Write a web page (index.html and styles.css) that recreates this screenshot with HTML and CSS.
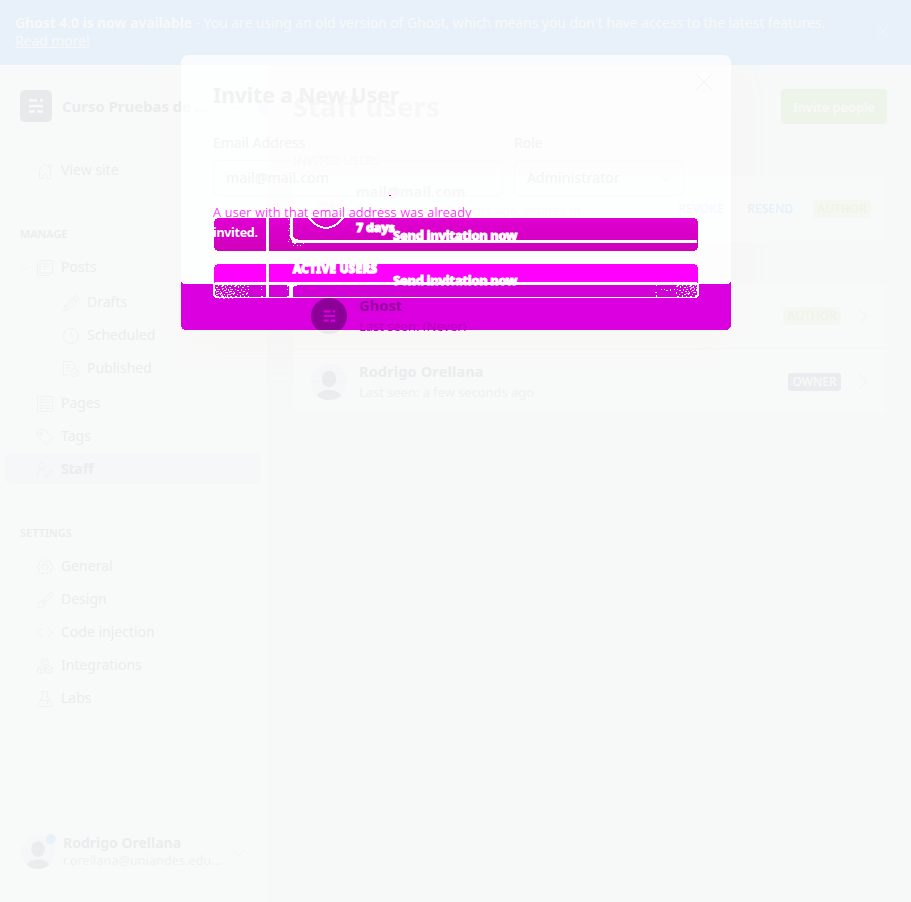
FILE: index.html
```html
<!DOCTYPE html>
<html lang="en">
<head>
<meta charset="utf-8">
<title>Staff users</title>
<link rel="stylesheet" href="styles.css">
</head>
<body>
<svg width="0" height="0" class="defs" aria-hidden="true">
  <symbol id="ghost" viewBox="0 0 14 14"><path d="M0 1.500h8M11 1.500h3M0 7h14M0 12.500h6M8.500 12.500h5.500" stroke="currentColor" stroke-width="2.600" fill="none"/></symbol>
  <symbol id="x" viewBox="0 0 16 16"><path d="M0 0l16 16M16 0L0 16"/></symbol>
  <symbol id="down" viewBox="0 0 12 8"><path d="M.5 1L6 6.500 11.500 1"/></symbol>
  <symbol id="right" viewBox="0 0 9 15"><path d="M.5.500L8 7.500.5 14.500"/></symbol>
  <symbol id="person" viewBox="0 0 36 36"><circle cx="18" cy="18" r="18" fill="#f5f7f9"/><ellipse cx="18" cy="15" rx="7.200" ry="8.300" fill="#ebecee"/><path d="M6 31.500Q9 26 18 26t12 5.500Q25 36 18 36T6 31.500" fill="#ebecee"/></symbol>
</svg>
<div class="app">
  <div class="banner">
    <p><b>Ghost 4.0 is now available</b> - You are using an old version of Ghost, which means you don't have access to the latest features. <br><u>Read more!</u></p>
    <svg class="ic banner-x" viewBox="0 0 16 16"><use href="#x"/></svg>
  </div>
  <div class="body">
    <aside class="side">
      <div class="site">
        <span class="logo"><svg width="14" height="14"><use href="#ghost"/></svg></span>
        <b class="site-name">Curso Pruebas de ...</b>
        <svg class="ic" viewBox="0 0 16 16"><circle cx="6.500" cy="6.500" r="6"/><path d="M11 11l5 5"/></svg>
        <i class="dot"></i>
      </div>
      <nav>
        <a class="item"><svg class="ic" viewBox="0 0 16 16"><path d="M.5 8.500L8 1l7.500 7.500M2.500 8v7.500h3.500V12q2-3 4 0v3.500h3.500V8M12 4.500V1.500h2V6"/></svg>View site</a>
        <h4 class="manage">MANAGE</h4>
        <a class="item posts"><svg class="ic caret" viewBox="0 0 12 8"><use href="#down"/></svg><svg class="ic" viewBox="0 0 16 16"><path d="M3 .5h12.500v12.500H3zM.5 3v12.500H13M5.500 4h7.500M5.500 6.500h7.500M5.500 9h4"/></svg>Posts</a>
        <div class="sub">
          <a class="item"><svg class="ic" viewBox="0 0 16 16"><path d="M.5 15.500l1.500-5L11.500 1q1.500-1 3 .5t.5 3L5.500 14zM10 2.500L13.500 6M2 10.500L5.500 14M4 12l7.500-7.500"/></svg>Drafts</a>
          <a class="item"><svg class="ic" viewBox="0 0 16 16"><circle cx="8" cy="8" r="7.500"/><path d="M8 3.500V8h3.500"/></svg>Scheduled</a>
          <a class="item"><svg class="ic" viewBox="0 0 16 16"><path d="M6 14H.5V.5h8L12 4v3M3 4h4M3 7h5M3 10h3"/><circle cx="11.500" cy="11.500" r="4"/><path d="M9.500 11.500l1.500 1.500 2.500-3"/></svg>Published</a>
        </div>
        <a class="item"><svg class="ic" viewBox="0 0 16 16"><path d="M.5.500h15v15H.5zM3 3.500h3v3H3zM3 9.500h3v3H3zM8 4h5M8 6.500h5M8 10h5M8 12.500h5"/></svg>Pages</a>
        <a class="item"><svg class="ic" viewBox="0 0 16 16"><path d="M.5 1.500q0-1 1-1h5l9 8.500-6 6.500-9-9z"/><circle cx="4.500" cy="4.500" r="1.300"/></svg>Tags</a>
        <a class="item active"><svg class="ic" viewBox="0 0 16 16"><circle cx="5" cy="3.500" r="3"/><path d="M.5 13V11q0-3 4-3 2 0 3.500 1.500M8 15.500l.5-2.500 5-5q1-.5 1.500.5t.3 1.500l-5 5z"/></svg>Staff</a>
        <h4 class="settings">SETTINGS</h4>
        <a class="item"><svg class="ic" viewBox="0 0 16 16"><path d="M6.500 1.500L8 .5l1.500 1 .7 1.300 2.800-.8 1 1-.6 2.700 2.100 1V9.500l-2 1 .5 2.500-1.500 1.500-2.500-.7-1 1.700H7L6 13.800l-2.500.7L2 13l.6-2.500L.5 9V7l2-1L2 3.500 3.500 2l2.300.8z"/><circle cx="8" cy="8" r="3"/></svg>General</a>
        <a class="item"><svg class="ic" viewBox="0 0 16 16"><path d="M5.500 9L13 1q1.500-1 2.500 0t0 2.500L7.500 11M5.500 9q-3-.5-4 2.500-.2 2.500-1 4 4 .5 6-1 2-2-1-5.500M6.500 8L9 10"/></svg>Design</a>
        <a class="item"><svg class="ic" viewBox="0 0 16 16"><path d="M5 3L.5 8 5 13M11 3l4.500 5L11 13"/></svg>Code injection</a>
        <a class="item"><svg class="ic" viewBox="0 0 16 16"><path d="M8 .5l3.500 1.700v3.600L8 7.500 4.500 5.800V2.200zM4 8l3.500 1.700v4L4 15.500.5 13.700v-4zM12 8l3.500 1.700v4L12 15.500l-3.500-1.800v-4zM4.500 2.200L8 4l3.500-1.800M.5 9.700l3.500 2 3.500-2M8.500 9.700l3.500 2 3.500-2M4 11.700v3.800M12 11.700v3.800"/></svg>Integrations</a>
        <a class="item"><svg class="ic" viewBox="0 0 16 16"><path d="M4 .5h8M5.500.5V6l-5 7.500q0 2 2 2h11q2 0 2-2l-5-7.500V.5M3 9.500h10M8 3h2.500M8 5.500h2.500M10.500 10.500v3M9 12h3M5 12.500v1"/></svg>Labs</a>
      </nav>
      <div class="me">
        <span class="me-pic"><svg width="34" height="34"><use href="#person"/></svg><i></i></span>
        <span class="me-text"><b>Rodrigo Orellana</b><small>r.orellana@uniandes.edu...</small></span>
        <svg class="ic me-down" viewBox="0 0 12 8"><use href="#down"/></svg>
      </div>
    </aside>
    <main>
      <header><h1>Staff users</h1><button class="invite">Invite people</button></header>
      <h3>INVITED USERS</h3>
      <section class="card invited">
        <span class="mailpic"><svg class="ic" viewBox="0 0 16 16"><path d="M1 3h14v10H1zM1 3l7 6 7-6"/></svg></span>
        <div class="who"><b>mail@mail.com</b><p>Invitation sent: 2 hours ago, expires in <strong class="days">7 days</strong></p></div>
        <span class="link">REVOKE</span><span class="link resend">RESEND</span><span class="badge">AUTHOR</span>
      </section>
      <h3 class="active-title">ACTIVE USERS</h3>
      <section class="card">
        <div class="row first">
          <span class="ghostpic"><svg width="13" height="12" viewBox="0 0 14 14"><use href="#ghost"/></svg></span>
          <div class="who over"><b>Ghost</b><small>Last seen: (Never)</small></div>
          <span class="badge">AUTHOR</span><svg class="ic go" viewBox="0 0 9 15"><use href="#right"/></svg>
        </div>
        <div class="row">
          <svg class="pic"><use href="#person"/></svg>
          <div class="who"><b>Rodrigo Orellana</b><small>Last seen: a few seconds ago</small></div>
          <span class="badge owner">OWNER</span><svg class="ic go" viewBox="0 0 9 15"><use href="#right"/></svg>
        </div>
      </section>
    </main>
  </div>
  <div class="modal">
    <svg class="art" width="550" height="275" viewBox="181 55 550 275" shape-rendering="crispEdges">
      <defs>
        <linearGradient id="g1" x2="0" y2="1"><stop stop-color="#e000d2"/><stop offset="1" stop-color="#cf00bb"/></linearGradient>
        <pattern id="noise" width="13" height="11" patternUnits="userSpaceOnUse"><path fill="#fff" d="M0 0h2v1H0zM4 0h1v2H4zM8 1h2v1H8zM1 3h1v1H1zM3 4h2v1H3zM7 3h1v2H7zM11 3h1v1h-1zM9 5h2v1H9zM0 6h1v2H0zM5 6h2v1H5zM3 8h1v1H3zM8 8h2v1H8zM12 7h1v2h-1zM1 10h2v1H1zM6 9h1v2H6zM10 10h1v1h-1z"/></pattern>
      </defs>
      <path d="M181 281l2 3h546l2-3v43q0 6-6 6H187q-6 0-6-6z" fill="#db00df"/>
      <rect x="214" y="218" width="484" height="33" rx="5" fill="url(#g1)"/>
      <path d="M214 270q0-6 5-6h474q5 0 5 6v13H214z" fill="#f0f"/>
      <rect x="213" y="282" width="486" height="16" rx="4" fill="#fff"/>
      <path d="M215 285h482v9l-2 3H217l-2-3z" fill="#d300d8"/>
      <path d="M266 218h3v33h-3zM266 264h3v34h-3zM292 240h405v3H292z" fill="#fff"/>
      <path d="M291.500 218v17q0 6 7 6" fill="none" stroke="#fff" stroke-width="3"/>
      <path d="M291 297v-9q0-4 6-4" fill="none" stroke="#fff" stroke-width="4"/>
      <path d="M309 218q17 20 34 0" fill="none" stroke="#fff" stroke-width="2"/>
      <path d="M215 285h31v12h-31zM246 286h3v11h-3zM676 285h21v12h-21zM655 285h2v12h-2zM288 219h3v23h-3zM292 243h14v3h-14zM287 285h3v12h-3zM261 286h2v11h-2zM658 288h18v3h-18z" fill="url(#noise)"/>
      <path d="M215 286h18v11h-18zM685 285h12v7h-12z" fill="url(#noise)" transform="translate(1 2)" opacity=".7"/>
      <path d="M389 195h2v1h-2z" fill="#d0c"/>
    </svg>
    <div class="modal-head"><h2>Invite a New User</h2><svg class="ic close" viewBox="0 0 16 16"><use href="#x"/></svg></div>
    <div class="form">
      <div><label>Email Address</label><div class="input">mail@mail.com</div></div>
      <div><label>Role</label><div class="input">Administrator<svg class="ic" viewBox="0 0 12 8"><use href="#down"/></svg></div></div>
    </div>
    <p class="error">A user with that email address was already<span>invited.</span></p>
    <div class="send">Send invitation now</div>
    <div class="send second">Send invitation now</div>
  </div>
</div>
</body>
</html>
```
FILE: styles.css
```css
* { box-sizing: border-box; }
body { margin: 0; font: 14px/18px "Noto Sans", "Open Sans", sans-serif; color: #ebecee; background: #f7f9f8; }
h1, h2, h3, h4, p { margin: 0; }
b, small, label { display: block; }
.defs { display: block; height: 0; }
.app { position: relative; width: 911px; height: 902px; overflow: hidden; display: flex; flex-direction: column; }
.ic { width: 16px; height: 16px; fill: none; stroke: #f0f1f1; stroke-width: 1; flex: none; overflow: visible; }

.banner { height: 65px; flex: none; background: #e8f1f9; color: #f7f9f9; padding: 14px 20px 0 15px; display: flex; justify-content: space-between; }
.banner b { display: inline; }
.banner p { white-space: nowrap; letter-spacing: -.085px; }
.banner-x { width: 12px; height: 12px; margin: 11px 2px 0 0; stroke: #f3f6f9; overflow: visible; }

.body { flex: 1; display: flex; min-height: 0; }
.side { width: 267px; flex: none; background: #f8faf9; display: flex; flex-direction: column; border-right: 1px solid #f7f9f8; }
.site { display: flex; align-items: center; height: 32px; margin: 25px 0 31px 20px; }
.logo { width: 32px; height: 32px; border-radius: 5px; background: #e8e9ea; color: #f8faf9; display: grid; place-items: center; flex: none; }
.site-name { margin-left: 10px; width: 168px; flex: none; white-space: nowrap; font-size: 15px; letter-spacing: -.05px; line-height: 18px; margin-top: -1px; }
.site .ic { margin-top: -4px; }
.dot { width: 18px; height: 18px; border-radius: 50%; background: #ecf6fd; margin: 2px 0 0 12px; flex: none; }
.item { display: flex; align-items: center; height: 33px; padding-left: 37px; gap: 8px; }
.item .ic { margin-top: 2px; }
nav h4 { font-size: 11px; font-weight: 600; line-height: 16px; padding-left: 20px; }
.manage { margin: 40px 0 8px; }
.settings { margin: 41px 0 8px; }
.posts { padding-left: 21px; gap: 8px; }
.posts .caret { width: 9px; height: 6px; margin-right: -1px; }
.sub { padding: 2px 0; }
.sub .item { padding-left: 63px; }
.active { background: #f6f7f9; font-weight: 700; height: 31px; margin: 1px 5px; padding-left: 32px; border-radius: 5px; letter-spacing: -.1px; }
.me { display: flex; margin: auto 20px 32px 21px; height: 36px; }
.me-pic { position: relative; width: 34px; margin: 1px 8px 0 0; }
.me-pic i { position: absolute; right: -1px; top: -1px; width: 10px; height: 10px; border-radius: 50%; background: #e8f1f9; }
.me-text { width: 160px; white-space: nowrap; }
.me-text b { line-height: 18px; }
.me-text small { font-size: 12.500px; line-height: 18px; color: #eff0f1; letter-spacing: .13px; }
.me-down { width: 12px; height: 8px; margin: 15px 0 0 10px; }

main { flex: 1; padding: 24px 24px 0 26px; background: #f7f8f8; }
header { height: 35px; display: flex; justify-content: space-between; align-items: center; }
h1 { font-size: 27px; line-height: 34px; color: #e0e2e2; letter-spacing: .3px; }
.invite { border: 0; border-radius: 4px; width: 106px; height: 35px; background: #edf5ea; color: #f7f9f8; font: 600 13px "Noto Sans", sans-serif; padding: 0; letter-spacing: -.1px; }
h3 { font-size: 12px; line-height: 16px; font-weight: 500; margin: 29px 0 6px; color: #e8e9e9; }
.card { background: #f8faf9; border-radius: 5px; border: 1px solid #f7f9f8; }
.invited { height: 67px; display: flex; align-items: center; padding: 0 15px 0 14px; }
.mailpic { width: 36px; height: 36px; display: grid; place-items: center; border-radius: 50%; background: #f6faf8; }
.who { flex: 1; margin-left: 12px; white-space: nowrap; }
.invited .who { white-space: normal; max-width: 250px; }
.invited p { font-size: 12.500px; line-height: 17px; color: #eeeeee; }
.invited b { line-height: 20px; letter-spacing: .2px; color: #e0e1e2; }
.days { position: relative; z-index: 3; color: #fff; font-weight: 900; display: block; -webkit-text-stroke: 1px #fff; letter-spacing: -.3px; }
.link { font-size: 12px; font-weight: 500; color: #d5edfb; margin-left: auto; }
.resend { color: #e5f1fa; margin: 0 20px 0 24px; }
.badge { font-size: 12px; font-weight: 500; line-height: 18px; width: 58px; text-align: center; border-radius: 3px; background: #f5f7f3; color: #eff3e8; flex: none; }
.active-title { position: relative; z-index: 3; margin: 20px 0 7px; line-height: 14px; color: #fff; font-size: 11.500px; font-weight: 800; -webkit-text-stroke: 1.500px #fff; letter-spacing: .4px; }
.row { height: 65px; display: flex; align-items: center; padding: 0 18px 0 17px; }
.first { border-bottom: 1px solid #f5f7f6; }
.row .who b { line-height: 21px; font-size: 14.500px; letter-spacing: .15px; }
.row small { font-size: 13px; line-height: 21px; color: #eff0f1; letter-spacing: -.05px; }
.pic { width: 36px; height: 36px; }
.ghostpic { position: relative; z-index: 3; width: 36px; height: 36px; border-radius: 50%; background: linear-gradient(#8d0097 32px, #e8e9ea 32px); color: #d500dc; display: grid; place-items: center; }
.over { position: relative; z-index: 3; color: #9500a0; }
.row .over small { color: #b900c1; height: 15px; margin-bottom: 6px; overflow: hidden; }
.owner { width: 53px; background: #ebecef; color: #f8faf9; }
.go { width: 9px; height: 15px; margin-left: 18px; }

.modal { position: absolute; z-index: 2; left: 181px; top: 55px; width: 550px; height: 275px; border-radius: 7px; background: rgba(255,255,255,.72); padding: 26px 32px 0; box-shadow: 0 20px 40px 3px rgba(255,200,210,.06); color: #f3f4f4; }
.art { position: absolute; left: 0; top: 0; }
.modal-head { display: flex; justify-content: space-between; height: 53px; }
h2 { font-size: 21px; line-height: 28px; color: #f1f2f2; }
.close { margin: -7px -13px 0 0; stroke: #f4f4f4; }
.form { display: grid; grid-template-columns: 290px 170px; gap: 11px; }
label { line-height: 18px; margin-bottom: 8px; }
.input { height: 36px; border: 1px solid #fbfbfb; border-radius: 5px; line-height: 34px; padding: 0 12px; display: flex; justify-content: space-between; align-items: center; letter-spacing: .15px; }
.input .ic { width: 10px; height: 7px; stroke: #f3f4f4; }
.error { position: relative; color: #f0f; font-size: 13px; line-height: 20px; font-weight: 300; letter-spacing: .2px; margin-top: 6px; height: 56px; white-space: nowrap; }
.error span { display: block; color: #fff; font-size: 12.500px; font-weight: 700; letter-spacing: -.3px; line-height: 22px; }
.send { position: absolute; left: 212px; top: 171px; font-size: 13px; line-height: 18px; font-weight: 800; color: #fff; white-space: nowrap; -webkit-text-stroke: .9px #fff; letter-spacing: -.38px; }
.second { top: 216px; }
```
